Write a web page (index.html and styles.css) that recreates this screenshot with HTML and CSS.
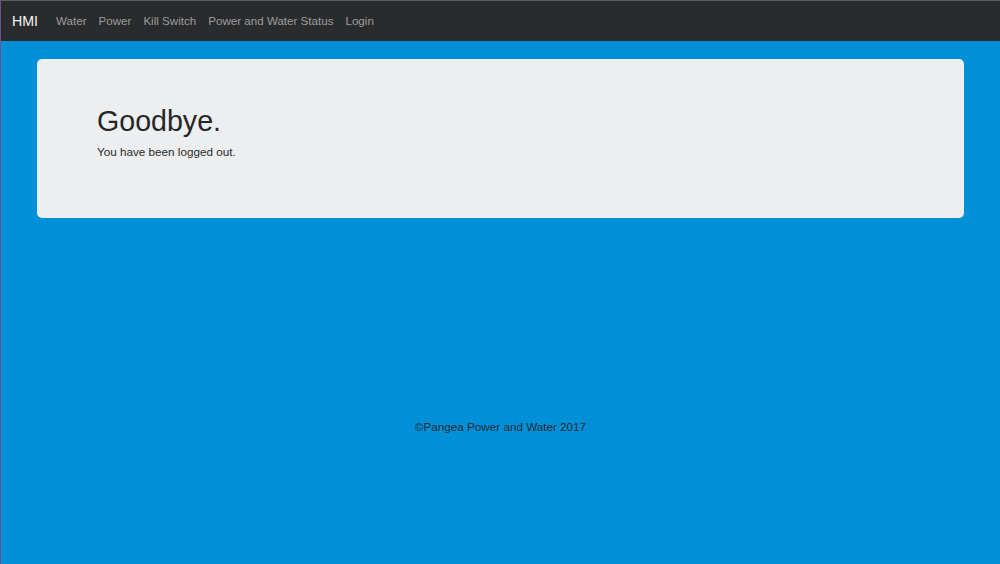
FILE: index.html
```html
<!DOCTYPE html>
<html lang="en">
<head>
<meta charset="utf-8">
<title>HMI</title>
<link rel="stylesheet" href="styles.css">
</head>
<body>
<nav class="navbar">
  <a class="brand" href="#">HMI</a>
  <ul class="nav-links">
    <li><a href="#">Water</a></li>
    <li><a href="#">Power</a></li>
    <li><a href="#">Kill Switch</a></li>
    <li><a href="#">Power and Water Status</a></li>
    <li><a href="#">Login</a></li>
  </ul>
</nav>
<main class="main">
  <section class="jumbotron">
    <h1 class="title">Goodbye.</h1>
    <p class="lead">You have been logged out.</p>
  </section>
</main>
<footer class="footer">©Pangea Power and Water 2017</footer>
</body>
</html>
```
FILE: styles.css
```css
html, body {
  margin: 0;
  padding: 0;
}
body {
  min-height: 564px;
  box-sizing: border-box;
  background: #0190d8;
  border-top: 1px solid #5c5d60;
  border-left: 1px solid #6a5590;
  font-family: "Liberation Sans", Arial, sans-serif;
  font-size: 11.7px;
  line-height: 1.43;
  color: #2a2a2a;
}
.navbar {
  height: 40px;
  background: #2a2b2d;
  display: flex;
  align-items: center;
}
.brand {
  padding-left: 11px;
  font-size: 14.2px;
  color: #f4f4f4;
  text-decoration: none;
  margin-right: 12px;
}
.nav-links {
  list-style: none;
  margin: 0;
  padding: 0;
  display: flex;
}
.nav-links a {
  display: block;
  padding: 0 6px;
  font-size: 11.6px;
  color: #9d9d9d;
  text-decoration: none;
}
.main {
  padding: 18px 36px 0 36px;
}
.jumbotron {
  background: #eceef0;
  border-radius: 5px;
  padding: 47px 60px 56px;
  height: 159px;
  box-sizing: border-box;
}
.title {
  margin: 0 0 7px;
  font-size: 28.6px;
  font-weight: 500;
  line-height: 1.1;
  color: #262626;
}
.lead {
  margin: 0;
}
.footer {
  margin-top: 201px;
  text-align: center;
  color: #1f2a33;
}
```
